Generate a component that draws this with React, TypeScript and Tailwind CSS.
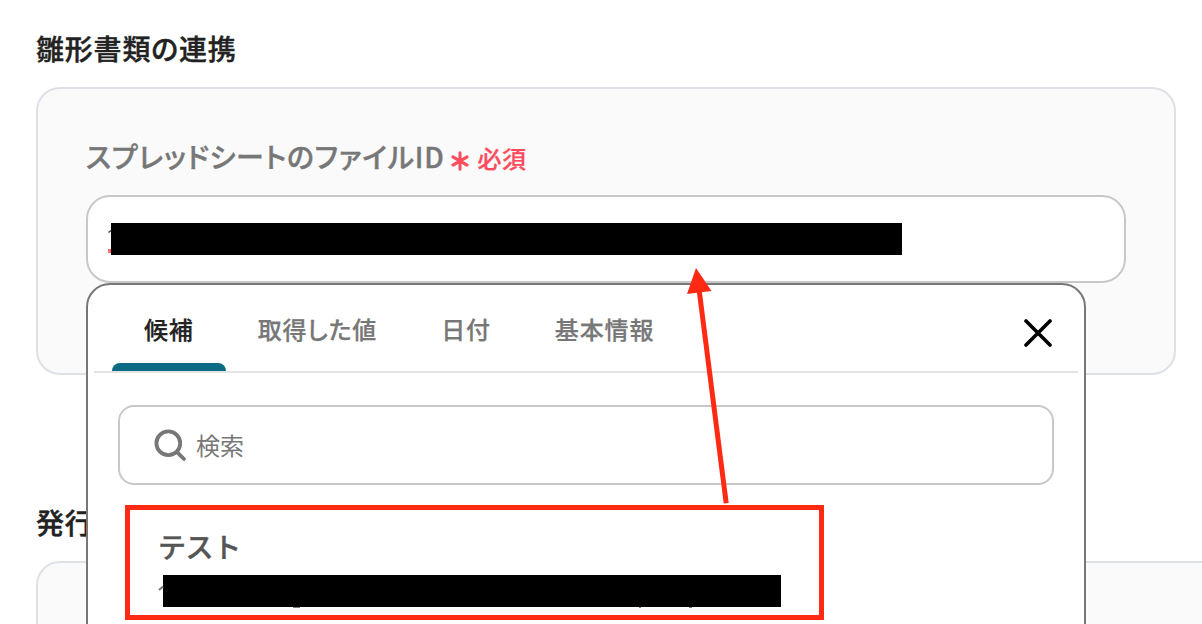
import type { ReactNode } from 'react';
import clsx from 'clsx';

const tabs = ['候補', '取得した値', '日付', '基本情報'];

function SectionTitle({ children }: { children: ReactNode }) {
  return <h2 className="text-[28px] leading-[42px] font-medium tracking-[0.8px] text-[#222] [-webkit-text-stroke:0.4px_#222]">{children}</h2>;
}

function SearchIcon() {
  return (
    <svg width="34" height="34" viewBox="0 0 34 34" fill="none" stroke="#777" strokeWidth="3.8" strokeLinecap="round">
      <circle cx="15.3" cy="15.3" r="11.9" />
      <path d="M24.3 24.3 L31 31" />
    </svg>
  );
}

function CloseIcon() {
  return (
    <svg width="28" height="28" viewBox="0 0 28 28" stroke="#000" strokeWidth="3.6" strokeLinecap="round">
      <path d="M2 2 L26 26 M26 2 L2 26" />
    </svg>
  );
}

function RequiredMark() {
  return (
    <span className="flex items-center text-[24px] leading-9 font-medium text-[#ff4b5c] [-webkit-text-stroke:0.25px_#ff4b5c]">
      <svg className="mt-1.5 mr-2" width="18" height="20" viewBox="0 0 18 20" stroke="currentColor" strokeWidth="3" strokeLinecap="round">
        <path d="M9 1.8 V18.2 M1.9 5.9 L16.1 14.1 M16.1 5.9 L1.9 14.1" />
      </svg>
      必須
    </span>
  );
}

function CandidatePanel() {
  return (
    <div className="absolute left-[86px] top-[283px] h-[360px] w-[1000px] rounded-t-3xl border-2 border-[#777] bg-white">
      <div className="mx-1.5 flex h-[88px] items-stretch border-b-2 border-[#e3e3e3] pl-[18px]">
        {tabs.map((tab, i) => (
          <button
            key={tab}
            className={clsx(
              'flex flex-col justify-between px-8 pt-[26px] text-[24px] leading-9 font-medium tracking-[0.85px]',
              i === 0 ? 'text-[#222] [-webkit-text-stroke:0.25px_#222]' : 'text-[#777] [-webkit-text-stroke:0.25px_#777]',
            )}
          >
            {tab}
            {i === 0 && <span className="-mx-8 h-2 self-stretch rounded-t-lg bg-[#0c6a85]" />}
          </button>
        ))}
        <button className="mt-[34px] mr-[26px] ml-auto self-start" aria-label="閉じる">
          <CloseIcon />
        </button>
      </div>
      <div className="mx-[30px] mt-8 flex h-20 items-center rounded-2xl border-2 border-[#c8c8c8] pl-[33px] text-[24px] text-[#777]">
        <SearchIcon />
        <span className="ml-[9px] tracking-normal">検索</span>
      </div>
      <div className="mt-10 ml-[70px]">
        <p className="text-[28px] leading-[42px] font-medium tracking-[-0.4px] text-[#555] [-webkit-text-stroke:0.4px_#555] [font-feature-settings:normal]">
          テスト
        </p>
        <div className="mt-2 ml-[5px] h-8 w-[618px] bg-black" />
      </div>
    </div>
  );
}

// Red frame and arrow drawn over the form, plus the stray ink around the masked ids
function Annotation() {
  return (
    <svg className="pointer-events-none absolute inset-0" width="1202" height="624" viewBox="0 0 1202 624" fill="none">
      <path d="M108.5 232.5 L111 230.5" stroke="#444" strokeWidth="1.6" />
      <path d="M108 251 H111" stroke="#ff6b6b" strokeWidth="4" />
      <path d="M159 590 L163 586.5" stroke="#777" strokeWidth="2" />
      <path d="M293 607.5 H300 M639 607.5 H641 M689 607.5 H692" stroke="#777" />
      <rect x="127.5" y="507.5" width="694" height="110" stroke="#ff2a13" strokeWidth="5" />
      <path d="M726.2 503.2 L698.5 285" stroke="#ff2a13" strokeWidth="5" />
      <path d="M696 268 L711.5 291 L687 294 Z" fill="#ff2a13" />
    </svg>
  );
}

export default function App() {
  return (
    <main className="relative h-[624px] w-[1202px] overflow-hidden bg-white pt-[27px] pl-9 font-['Noto_Sans_CJK_JP',sans-serif] tracking-[0.04em] [font-feature-settings:'palt']">
      <SectionTitle>雛形書類の連携</SectionTitle>
      <section className="mt-[18px] h-[288px] w-[1140px] rounded-3xl border-2 border-[#dde1e6] bg-[#fafafa] px-12 pt-[46px]">
        <div className="flex h-[42px] items-center">
          <span className="mr-[7px] text-[28px] leading-[42px] font-medium tracking-[0.76px] text-[#777] [-webkit-text-stroke:0.4px_#777]">
            スプレッドシートのファイルID
          </span>
          <div className="mt-1">
            <RequiredMark />
          </div>
        </div>
        <div className="mt-[18px] flex h-[88px] items-center rounded-3xl border-2 border-[#c8c8c8] bg-white pl-[23px]">
          <div className="h-8 w-[791px] bg-black" />
        </div>
      </section>
      <div className="mt-[126px]">
        <SectionTitle>発行</SectionTitle>
      </div>
      <section className="mt-[18px] h-[288px] w-[1240px] rounded-3xl border-2 border-[#dde1e6] bg-[#fafafa]" />
      <CandidatePanel />
      <Annotation />
    </main>
  );
}
